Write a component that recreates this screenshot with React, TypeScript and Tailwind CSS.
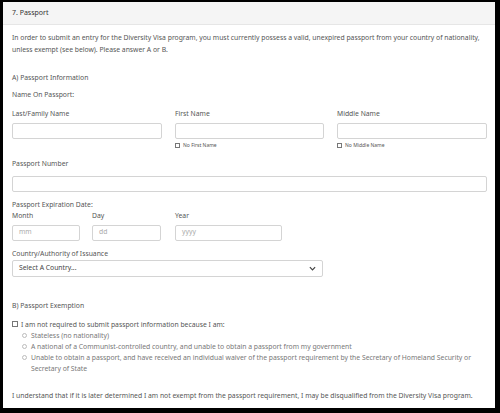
const font = { fontFamily: '"Noto Sans", "Open Sans", sans-serif' };

function Field({ label, placeholder, className }: { label: string; placeholder?: string; className?: string }) {
  return (
    <div className={className}>
      <div className="leading-[12px] mb-[3px]">{label}</div>
      <div className="h-[16px] border border-[#d4d4d4] rounded-[2px] bg-white px-[6px] flex items-center text-[#aaa]">
        {placeholder}
      </div>
    </div>
  );
}

function Check({ label, small }: { label: string; small?: boolean }) {
  return (
    <div className={`flex items-center gap-[3px] ${small ? 'text-[5px] mt-[3px]' : ''}`}>
      <span className={`${small ? 'w-[5px] h-[5px]' : 'w-[6px] h-[6px]'} border border-[#777] bg-white shrink-0`} />
      <span>{label}</span>
    </div>
  );
}

function Radio({ children }: { children: React.ReactNode }) {
  return (
    <div className="flex items-start gap-[4px] pl-[10px]">
      <span className="w-[5px] h-[5px] mt-[3px] rounded-full border border-[#bbb] bg-white shrink-0" />
      <span className="text-[#777] whitespace-nowrap">{children}</span>
    </div>
  );
}

export default function App() {
  return (
    <div className="w-[500px] h-[413px] bg-black pt-[2px] pl-[3px] overflow-hidden" style={font}>
      <div className="w-[492px] h-[406px] bg-white text-[6.8px] text-[#555]">
        <div className="h-[23px] bg-[#f5f5f5] border-b border-[#e6e6e6] flex items-center pl-[9px] text-[#333] text-[7px]">
          7. Passport
        </div>
        <div className="pl-[9px] pr-[5px]">
          <p className="mt-[7px] leading-[12px] whitespace-nowrap">
            In order to submit an entry for the Diversity Visa program, you must currently possess a valid, unexpired passport from your country of nationality,
            <br />
            unless exempt (see below). Please answer A or B.
          </p>
          <div className="mt-[16px] leading-[12px]">A) Passport Information</div>
          <div className="mt-[5px] leading-[12px]">Name On Passport:</div>
          <div className="mt-[7px] grid grid-cols-[150px_149px_150px] gap-x-[13px] w-[475px]">
            <Field label="Last/Family Name" />
            <div>
              <Field label="First Name" />
              <Check label="No First Name" small />
            </div>
            <div>
              <Field label="Middle Name" />
              <Check label="No Middle Name" small />
            </div>
          </div>
          <div className="mt-[8px] w-[475px]">
            <div className="leading-[12px] mb-[6px]">Passport Number</div>
            <div className="h-[16px] border border-[#d4d4d4] rounded-[2px]" />
          </div>
          <div className="mt-[7px] leading-[11px]">Passport Expiration Date:</div>
          <div className="flex">
            <Field label="Month" placeholder="mm" className="w-[68px]" />
            <Field label="Day" placeholder="dd" className="w-[69px] ml-[12px]" />
            <Field label="Year" placeholder="yyyy" className="w-[107px] ml-[14px]" />
          </div>
          <div className="mt-[7px] leading-[12px]">Country/Authority of Issuance</div>
          <div className="w-[311px] h-[17px] border border-[#d4d4d4] rounded-[2px] flex items-center justify-between px-[6px] text-[#444]">
            <span>Select A Country...</span>
            <svg width="7" height="5" viewBox="0 0 8 5" fill="none" stroke="#444" strokeWidth="1.4">
              <path d="M1 1l3 3 3-3" />
            </svg>
          </div>
          <div className="mt-[23px] leading-[12px]">B) Passport Exemption</div>
          <div className="mt-[7px] leading-[11px]">
            <Check label="I am not required to submit passport information because I am:" />
            <Radio>Stateless (no nationality)</Radio>
            <Radio>A national of a Communist-controlled country, and unable to obtain a passport from my government</Radio>
            <Radio>
              Unable to obtain a passport, and have received an individual waiver of the passport requirement by the Secretary of Homeland Security or
              <br />
              Secretary of State
            </Radio>
          </div>
          <div className="mt-[16px] leading-[12px] whitespace-nowrap">
            I understand that if it is later determined I am not exempt from the passport requirement, I may be disqualified from the Diversity Visa program.
          </div>
        </div>
      </div>
    </div>
  );
}
